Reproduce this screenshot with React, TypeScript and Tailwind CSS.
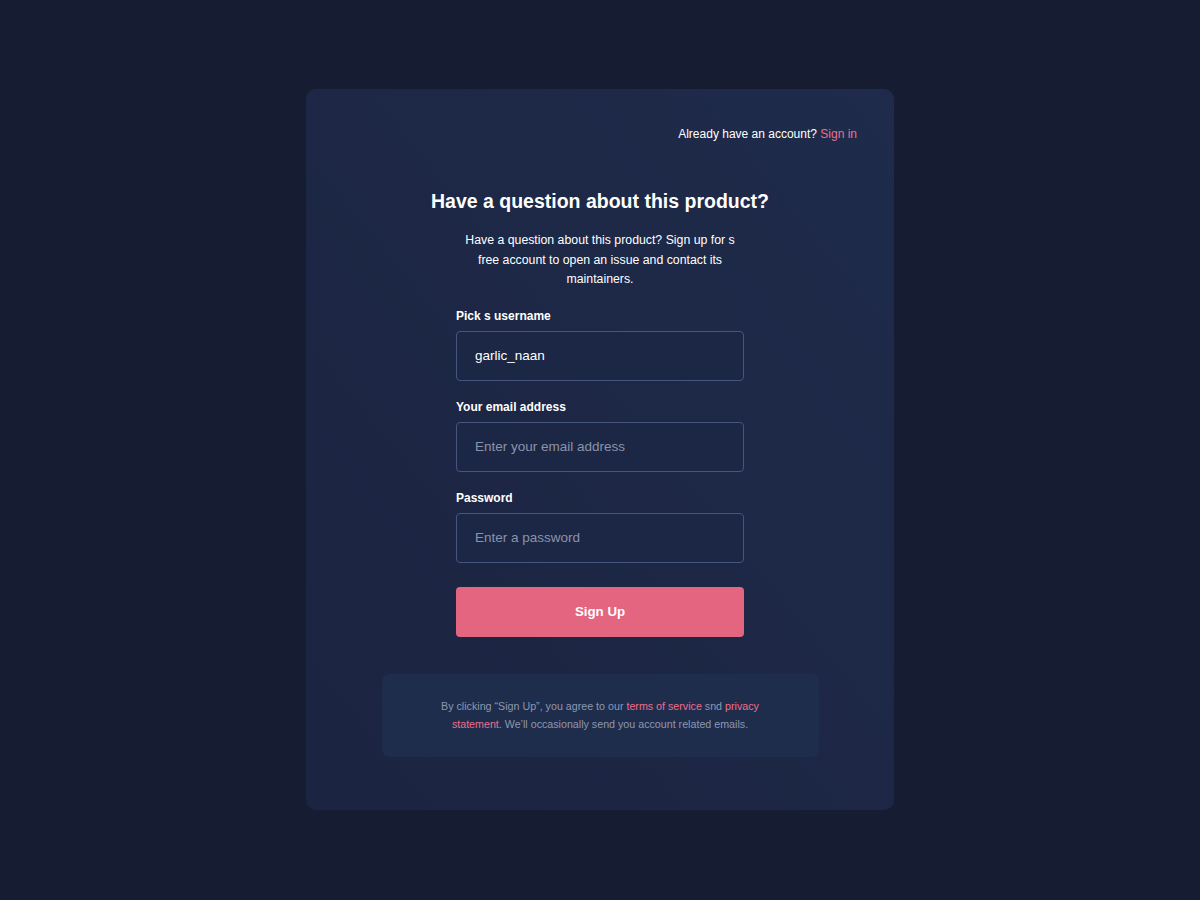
import * as React from "react";

function Field({
  label,
  placeholder,
  value,
  type = "text",
}: {
  label: string;
  placeholder: string;
  value?: string;
  type?: string;
}) {
  return (
    <label className="flex flex-col">
      <span className="text-[12px] font-bold leading-4 text-white">{label}</span>
      <input
        type={type}
        defaultValue={value}
        placeholder={placeholder}
        className="mt-[7px] h-[50px] w-full rounded-[4px] border border-[#45557f] bg-[#1c2745] px-[18px] text-[13.5px] text-white outline-none placeholder:text-[#8a93ab]"
      />
    </label>
  );
}

export default function App() {
  return (
    <div
      className="flex min-h-[900px] w-full items-start justify-center bg-[#161d33] pt-[89px] text-white"
      style={{ fontFamily: '"Liberation Sans", Arial, sans-serif' }}
    >
      <div className="flex h-[721px] w-[588px] flex-col rounded-[10px] bg-gradient-to-bl from-[#1f2b4b] to-[#1b2440] px-[37px]">
        <div className="pt-[37px] text-right text-[12px] leading-4 text-white">
          Already have an account? <a className="text-[#ec6f8c]">Sign in</a>
        </div>

        <div className="mx-auto mt-[47px] flex w-[288px] flex-col">
          <h1 className="-mx-10 text-center text-[19.5px] font-bold leading-6 text-white">
            Have a question about this product?
          </h1>
          <p className="mx-auto mt-[18px] w-[280px] text-center text-[12.3px] leading-[19.5px] text-white">
            Have a question about this product? Sign up for s free account to open an issue and contact its
            maintainers.
          </p>

          <div className="mt-[18px] flex flex-col gap-[18px]">
            <Field label="Pick s username" placeholder="" value="garlic_naan" />
            <Field label="Your email address" placeholder="Enter your email address" type="email" />
            <Field label="Password" placeholder="Enter a password" type="password" />
          </div>

          <button className="mt-[24px] h-[50px] w-full rounded-[4px] bg-[#e4657f] text-[13.3px] font-bold text-white">
            Sign Up
          </button>
        </div>

        <div className="mx-auto mt-[37px] flex h-[83px] w-[437px] items-center justify-center rounded-[8px] bg-[#1f2d4d] px-[56px]">
          <p className="text-center text-[10.7px] leading-[18px] text-[#8d97b0]">
            By clicking “Sign Up”, you agree to our <a className="text-[#ec6f8c]">terms of service</a> snd{" "}
            <a className="text-[#ec6f8c]">privacy statement</a>. We’ll occasionally send you account related
            emails.
          </p>
        </div>
      </div>
    </div>
  );
}
